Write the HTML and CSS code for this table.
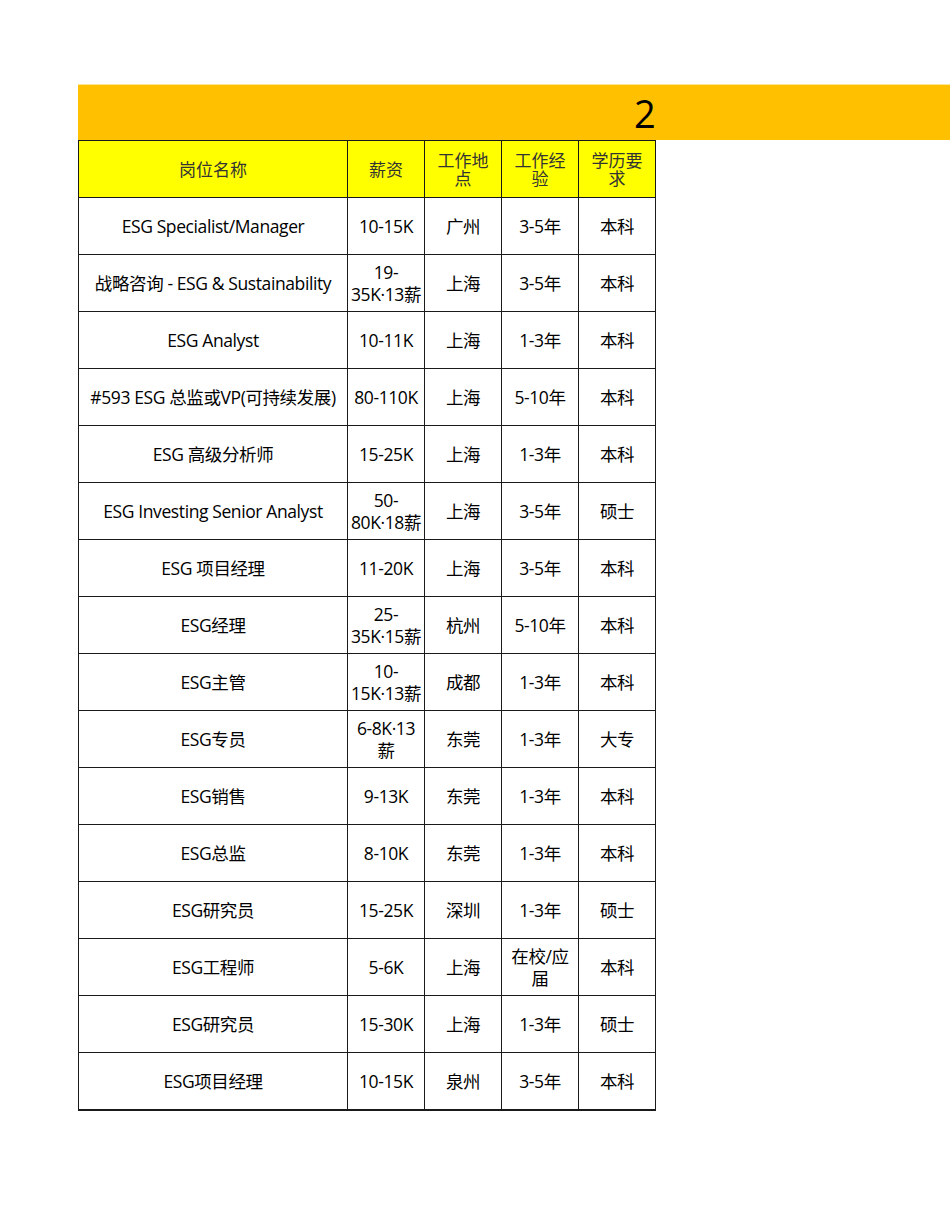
FILE: index.html
```html
<!DOCTYPE html>
<html lang="zh-CN">
<head>
<meta charset="utf-8">
<title>ESG 岗位</title>
<link rel="stylesheet" href="styles.css">
</head>
<body>
<div class="sheet">
  <div class="banner"><span class="banner-title">2</span></div>
  <table class="jobs">
    <colgroup>
      <col class="c-name"><col class="c-sm"><col class="c-sm"><col class="c-sm"><col class="c-sm">
    </colgroup>
    <thead>
      <tr>
        <th>岗位名称</th>
        <th>薪资</th>
        <th>工作地<br>点</th>
        <th>工作经<br>验</th>
        <th>学历要<br>求</th>
      </tr>
    </thead>
    <tbody>
      <tr><td>ESG Specialist/Manager</td><td>10-15K</td><td>广州</td><td>3-5年</td><td>本科</td></tr>
      <tr><td>战略咨询 - ESG &amp; Sustainability</td><td>19-<br>35K·13薪</td><td>上海</td><td>3-5年</td><td>本科</td></tr>
      <tr><td>ESG Analyst</td><td>10-11K</td><td>上海</td><td>1-3年</td><td>本科</td></tr>
      <tr><td>#593 ESG 总监或VP(可持续发展)</td><td>80-110K</td><td>上海</td><td>5-10年</td><td>本科</td></tr>
      <tr><td>ESG 高级分析师</td><td>15-25K</td><td>上海</td><td>1-3年</td><td>本科</td></tr>
      <tr><td>ESG Investing Senior Analyst</td><td>50-<br>80K·18薪</td><td>上海</td><td>3-5年</td><td>硕士</td></tr>
      <tr><td>ESG 项目经理</td><td>11-20K</td><td>上海</td><td>3-5年</td><td>本科</td></tr>
      <tr><td>ESG经理</td><td>25-<br>35K·15薪</td><td>杭州</td><td>5-10年</td><td>本科</td></tr>
      <tr><td>ESG主管</td><td>10-<br>15K·13薪</td><td>成都</td><td>1-3年</td><td>本科</td></tr>
      <tr><td>ESG专员</td><td>6-8K·13<br>薪</td><td>东莞</td><td>1-3年</td><td>大专</td></tr>
      <tr><td>ESG销售</td><td>9-13K</td><td>东莞</td><td>1-3年</td><td>本科</td></tr>
      <tr><td>ESG总监</td><td>8-10K</td><td>东莞</td><td>1-3年</td><td>本科</td></tr>
      <tr><td>ESG研究员</td><td>15-25K</td><td>深圳</td><td>1-3年</td><td>硕士</td></tr>
      <tr><td>ESG工程师</td><td>5-6K</td><td>上海</td><td>在校/应<br>届</td><td>本科</td></tr>
      <tr><td>ESG研究员</td><td>15-30K</td><td>上海</td><td>1-3年</td><td>硕士</td></tr>
      <tr><td>ESG项目经理</td><td>10-15K</td><td>泉州</td><td>3-5年</td><td>本科</td></tr>
    </tbody>
  </table>
</div>
</body>
</html>
```
FILE: styles.css
```css
html, body {
  margin: 0;
  padding: 0;
  background: #ffffff;
}

.sheet {
  padding: 84px 0 0 78px;
  overflow: hidden;
}

.banner {
  height: 56px;
  background: #ffc000;
  border-top: 1px solid #ffe699;
  box-sizing: border-box;
  display: flex;
  align-items: center;
  padding-left: 556px;
}

.banner-title {
  font-family: "Open Sans", "Liberation Sans", sans-serif;
  font-size: 38px;
  line-height: 1;
  color: #000;
}

.jobs {
  border-collapse: collapse;
  table-layout: fixed;
  width: 577px;
  font-family: "Open Sans", "Noto Sans CJK SC", sans-serif;
  font-size: 17.5px;
  color: #000;
}

.c-name { width: 269px; }
.c-sm { width: 77px; }

.jobs th,
.jobs td {
  border: 1px solid #1a1a1a;
  height: 56px;
  padding: 0;
  text-align: center;
  vertical-align: middle;
  white-space: nowrap;
  overflow: hidden;
}

.jobs th {
  background: #ffff00;
  font-family: "Noto Sans CJK SC", sans-serif;
  font-weight: normal;
  font-size: 17px;
  line-height: 18px;
  color: #333;
}

.jobs td {
  line-height: 22px;
  letter-spacing: -0.4px;
}

.jobs tbody tr:last-child td {
  border-bottom-width: 2px;
}
```
